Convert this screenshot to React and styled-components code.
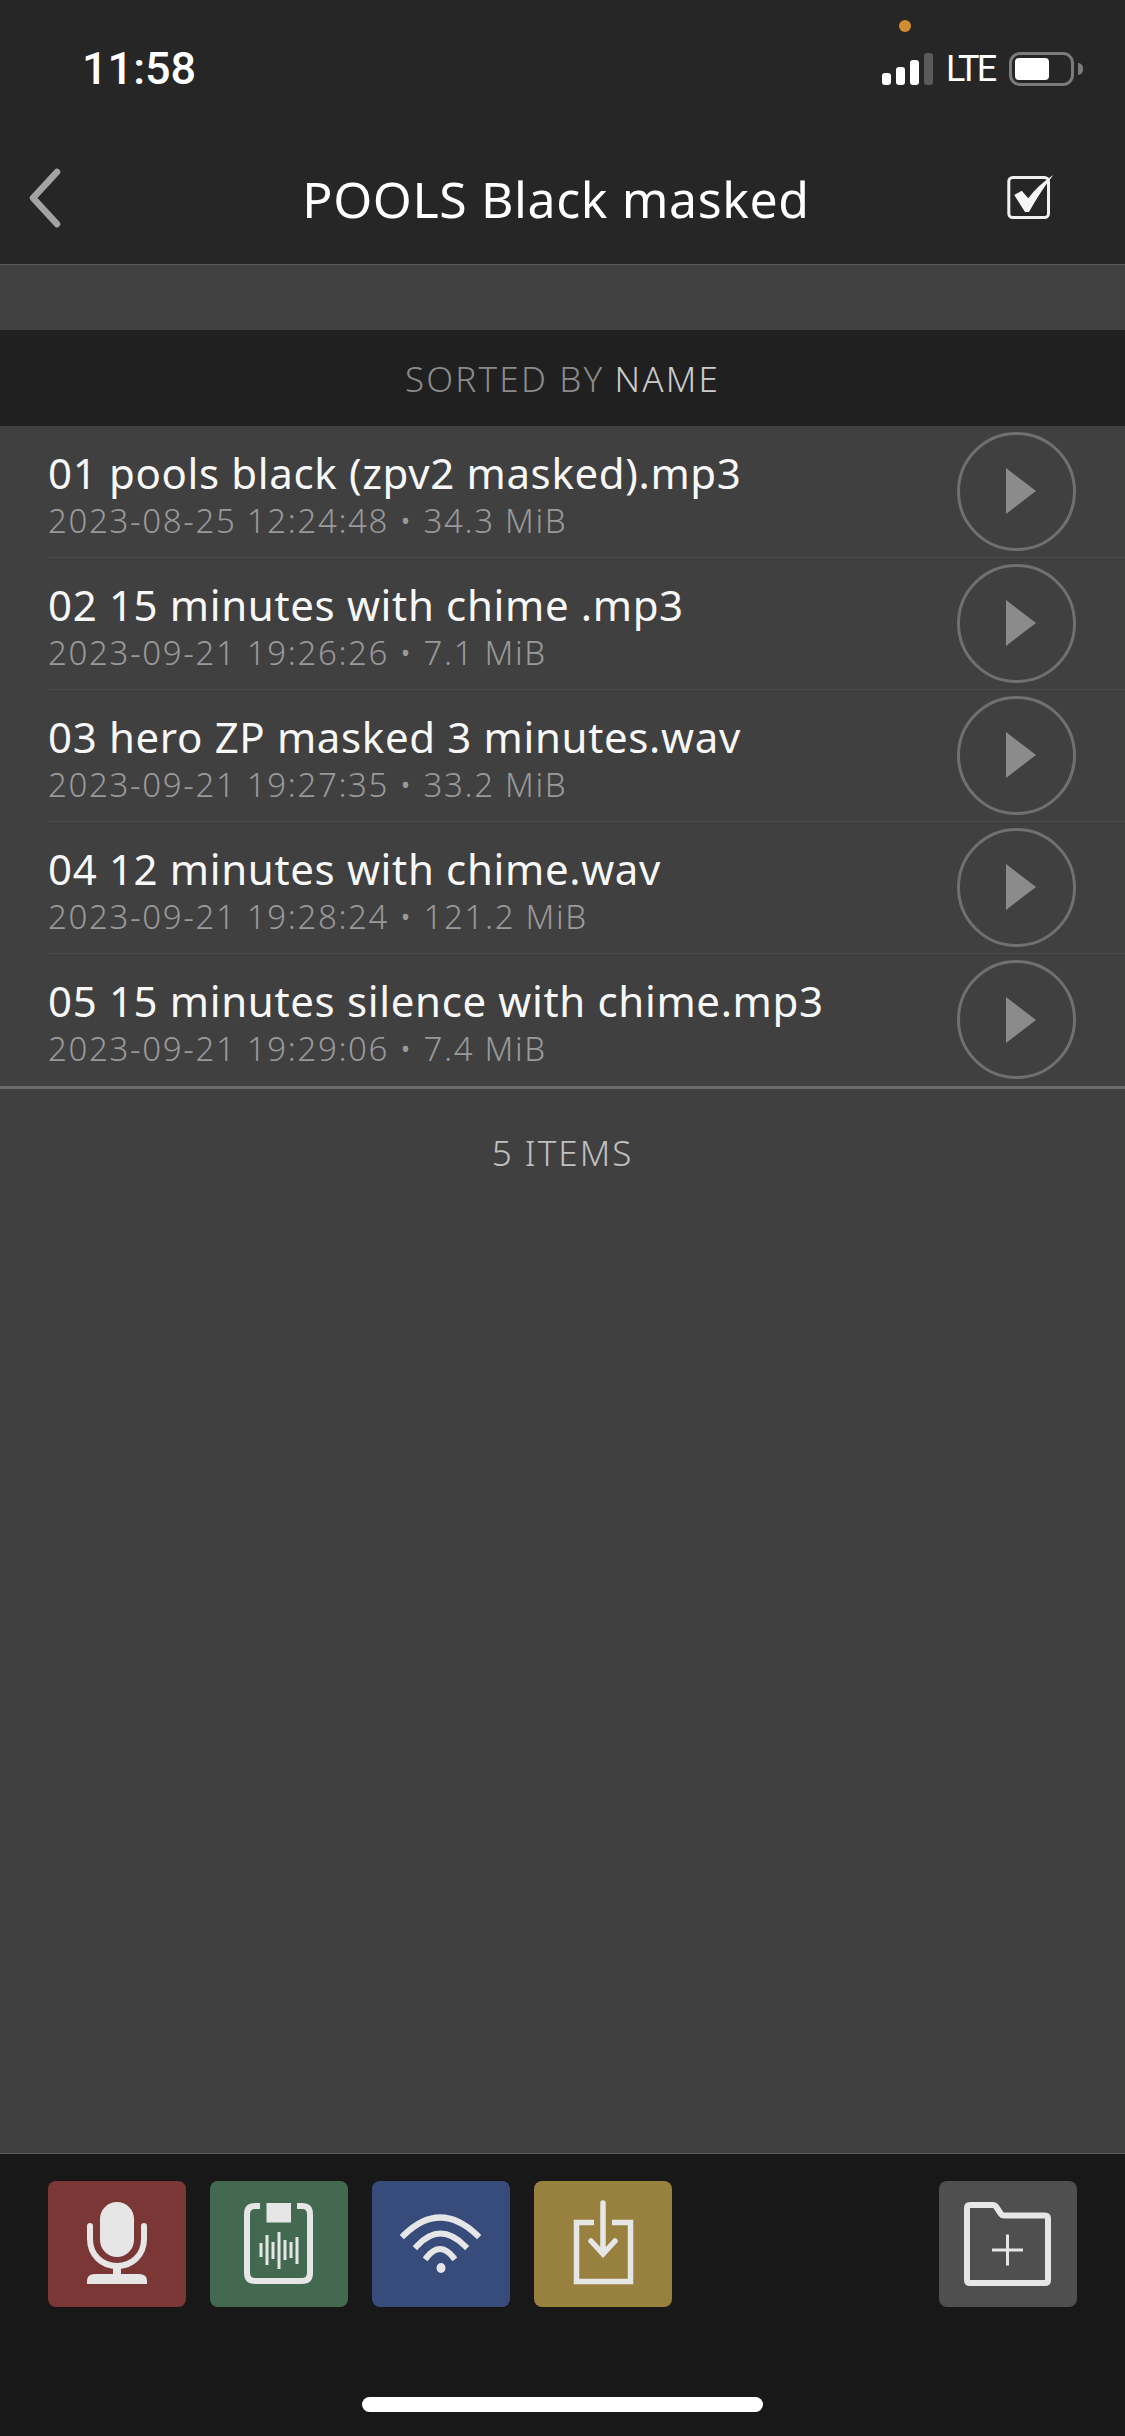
import React from 'react'
import styled, { createGlobalStyle } from 'styled-components'

const files = [
  { name: '01 pools black (zpv2 masked).mp3', meta: '2023-08-25 12:24:48 • 34.3 MiB' },
  { name: '02 15 minutes with chime .mp3', meta: '2023-09-21 19:26:26 • 7.1 MiB' },
  { name: '03 hero ZP masked 3 minutes.wav', meta: '2023-09-21 19:27:35 • 33.2 MiB' },
  { name: '04 12 minutes with chime.wav', meta: '2023-09-21 19:28:24 • 121.2 MiB' },
  { name: '05 15 minutes silence with chime.mp3', meta: '2023-09-21 19:29:06 • 7.4 MiB' },
]

const waveBars = [
  [51, 62, 76], [57, 54, 84], [63, 61, 78], [69, 51, 88], [75, 59, 79], [81, 61, 77], [87, 56, 83],
]

function App() {
  return (
    <>
      <GlobalStyle />
      <Screen>
        <TopArea>
          <StatusBar>
            <Time>11:58</Time>
            <CameraDot />
            <StatusRight>
              <Signal>
                <SignalBar height="12px" />
                <SignalBar height="18px" />
                <SignalBar height="25px" />
                <SignalBar height="32px" dim />
              </Signal>
              <Lte>LTE</Lte>
              <Battery>
                <BatteryFill />
                <BatteryNub />
              </Battery>
            </StatusRight>
          </StatusBar>
          <NavBar>
            <BackIcon width="40" height="62" viewBox="0 0 40 62">
              <path d="M32 5 L8 31 L32 57" fill="none" stroke="#a3a3a3" strokeWidth="6.5" strokeLinecap="round" strokeLinejoin="round" />
            </BackIcon>
            <Title>POOLS Black masked</Title>
            <CheckIcon width="50" height="48" viewBox="0 0 50 48">
              <rect x="3.8" y="3.5" width="39.7" height="40" rx="4" fill="none" stroke="#f0f0f0" strokeWidth="3" />
              <path d="M9.3 21 L16.7 16.7 L23.3 24.3 Q33 11 48.3 1 Q35 18 24 38 H20 Z" fill="#f5f5f5" />
            </CheckIcon>
          </NavBar>
        </TopArea>
        <Band />
        <SortBar>
          <SortLabel>SORTED BY</SortLabel> <SortValue>NAME</SortValue>
        </SortBar>
        <List>
          {files.map((file) => (
            <Row key={file.name}>
              <RowText>
                <FileName>{file.name}</FileName>
                <FileMeta>{file.meta}</FileMeta>
              </RowText>
              <PlayButton>
                <PlayTriangle width="30" height="46" viewBox="0 0 30 46">
                  <path d="M0 0 L30 23 L0 46 Z" fill="#8b8b8b" />
                </PlayTriangle>
              </PlayButton>
            </Row>
          ))}
        </List>
        <Count>5 ITEMS</Count>
        <Spacer />
        <BottomBar>
          <Tools>
            <ToolGroup>
              <Tool background="#7b3735">
                <svg width="138" height="126" viewBox="0 0 138 126">
                  <rect x="52" y="21" width="34" height="55" rx="17" fill="#e6e6e6" />
                  <path d="M42 45 V58 C42 74 54 85 69 85 C84 85 96 74 96 58 V45" fill="none" stroke="#e6e6e6" strokeWidth="6" strokeLinecap="round" />
                  <path d="M65 85 H73 V93 H91 Q99 93 99 100 V103 H39 V100 Q39 93 47 93 H65 Z" fill="#e6e6e6" />
                </svg>
              </Tool>
              <Tool background="#436a50">
                <svg width="138" height="126" viewBox="0 0 138 126">
                  <path d="M50 25 H45 Q37 25 37 33 V92 Q37 100 45 100 H92 Q100 100 100 92 V33 Q100 25 92 25 H87" fill="none" stroke="#e6e6e6" strokeWidth="6" />
                  <rect x="56.5" y="22" width="24.5" height="19.5" fill="#e6e6e6" />
                  {waveBars.map(([x, y1, y2]) => (
                    <line key={x} x1={x} x2={x} y1={y1} y2={y2} stroke="#e6e6e6" strokeWidth="3" />
                  ))}
                </svg>
              </Tool>
              <Tool background="#384c7c">
                <svg width="138" height="126" viewBox="0 0 138 126">
                  <path d="M32 54 Q68 19 105 54" fill="none" stroke="#e6e6e6" strokeWidth="6" strokeLinecap="square" />
                  <path d="M45 65 Q68 40 93 65" fill="none" stroke="#e6e6e6" strokeWidth="6" strokeLinecap="square" />
                  <path d="M55 76 Q68 60 81 76" fill="none" stroke="#e6e6e6" strokeWidth="6" strokeLinecap="square" />
                  <ellipse cx="69" cy="87" rx="4.5" ry="5" fill="#e6e6e6" />
                </svg>
              </Tool>
              <Tool background="#98803f">
                <svg width="138" height="126" viewBox="0 0 138 126">
                  <path d="M60 41.5 H42.5 V100.5 H96.5 V41.5 H78" fill="none" stroke="#e6e6e6" strokeWidth="5.5" />
                  <path d="M69 22 V72 M57 60 L69 73 L81 60" fill="none" stroke="#e6e6e6" strokeWidth="5.5" strokeLinecap="round" />
                </svg>
              </Tool>
            </ToolGroup>
            <Tool background="#4f4f4f">
              <svg width="138" height="126" viewBox="0 0 138 126">
                <path d="M28 27 Q28 24 31 24 H54 Q56 24 57 25.5 L62 33 Q63 34.5 65 34.5 H106 Q109 34.5 109 37.5 V99 Q109 102 106 102 H31 Q28 102 28 99 Z" fill="none" stroke="#e6e6e6" strokeWidth="6" />
                <path d="M68.5 53.5 V84.5 M53 69 H84" fill="none" stroke="#e6e6e6" strokeWidth="3" />
              </svg>
            </Tool>
          </Tools>
          <HomeIndicator />
        </BottomBar>
      </Screen>
    </>
  )
}

export default App

const GlobalStyle = createGlobalStyle`
  html, body {
    margin: 0;
    padding: 0;
    background: #404040;
  }
  * {
    box-sizing: border-box;
  }
`

const Screen = styled.div`
  width: 1125px;
  height: 2436px;
  display: flex;
  flex-direction: column;
  background: #404040;
  font-family: "Noto Sans", Roboto, sans-serif;
  overflow: hidden;
`

const TopArea = styled.div`
  height: 265px;
  background: #262626;
  border-bottom: 1px solid #5c5c5c;
`

const StatusBar = styled.div`
  position: relative;
  height: 133px;
  display: flex;
  justify-content: space-between;
  padding: 52px 51px 0 82px;
`

const Time = styled.div`
  color: #fff;
  font-family: Roboto, sans-serif;
  font-size: 45px;
  font-weight: 500;
  line-height: 34px;
`

const CameraDot = styled.div`
  position: absolute;
  left: 899px;
  top: 20px;
  width: 12px;
  height: 12px;
  border-radius: 50%;
  background: #d08d31;
`

const StatusRight = styled.div`
  display: flex;
  align-items: flex-start;
`

const Signal = styled.div`
  display: flex;
  align-items: flex-end;
  gap: 5px;
  height: 33px;
  margin-right: 13px;
`

const SignalBar = styled.div`
  width: 9px;
  height: ${props => props.height};
  border-radius: 3px;
  background: ${props => (props.dim ? '#5a5a5a' : '#fff')};
`

const Lte = styled.div`
  color: #fff;
  font-family: Roboto, sans-serif;
  font-size: 36px;
  line-height: 34px;
  letter-spacing: -2.6px;
  margin-right: 14px;
  width: 49px;
`

const Battery = styled.div`
  position: relative;
  width: 65px;
  height: 34px;
  border: 3px solid #7b7b7b;
  border-radius: 11px;
  padding: 3px;
`

const BatteryFill = styled.div`
  width: 34px;
  height: 22px;
  border-radius: 4px;
  background: #fff;
`

const BatteryNub = styled.div`
  position: absolute;
  left: 66px;
  top: 8px;
  width: 5px;
  height: 12px;
  border-radius: 0 6px 6px 0;
  background: #7b7b7b;
`

const NavBar = styled.div`
  display: flex;
  align-items: center;
  height: 131px;
  padding: 0 70px 0 25px;
`

const BackIcon = styled.svg`
  flex: none;
  margin-top: -1px;
`

const Title = styled.div`
  flex: 1;
  text-align: center;
  color: #fff;
  font-size: 50px;
  font-weight: 400;
  letter-spacing: 0.6px;
  line-height: 60px;
  margin-left: 42px;
  margin-top: 1px;
`

const CheckIcon = styled.svg`
  flex: none;
  margin-top: -2px;
`

const Band = styled.div`
  height: 65px;
  background: #414141;
`

const SortBar = styled.div`
  height: 96px;
  display: flex;
  align-items: center;
  justify-content: center;
  gap: 10px;
  background: #202020;
  font-size: 35px;
  font-weight: 300;
  letter-spacing: 2.2px;
`

const SortLabel = styled.span`
  color: #8a8a8a;
`

const SortValue = styled.span`
  color: #cccccc;
`

const List = styled.div`
  border-bottom: 3px solid #6b6b6b;
`

const Row = styled.div`
  height: 132px;
  margin-left: 48px;
  padding-right: 49px;
  display: flex;
  align-items: center;
  justify-content: space-between;
  border-bottom: 1px solid #4b4b4b;
  &:last-child {
    border-bottom: 0;
  }
`

const RowText = styled.div`
  display: flex;
  flex-direction: column;
  gap: 3px;
  margin-top: 5px;
`

const FileName = styled.div`
  color: #f7f7f7;
  font-size: 42px;
  font-weight: 400;
  letter-spacing: 0.65px;
  line-height: 50px;
`

const FileMeta = styled.div`
  color: #999999;
  font-size: 33px;
  font-weight: 300;
  letter-spacing: 1.65px;
  line-height: 40px;
`

const PlayButton = styled.div`
  width: 119px;
  height: 119px;
  border: 3px solid #707070;
  border-radius: 50%;
  display: flex;
  align-items: center;
  justify-content: center;
  margin-top: -1px;
`

const PlayTriangle = styled.svg`
  margin-left: 8px;
`

const Count = styled.div`
  margin-top: 44px;
  text-align: center;
  color: #c0c0c0;
  font-size: 35px;
  font-weight: 300;
  letter-spacing: 2px;
  line-height: 40px;
`

const Spacer = styled.div`
  flex: 1;
`

const BottomBar = styled.div`
  height: 283px;
  background: #181818;
  border-top: 1px solid #5e5e5e;
  display: flex;
  flex-direction: column;
  align-items: center;
`

const Tools = styled.div`
  width: 100%;
  display: flex;
  justify-content: space-between;
  padding: 27px 48px 0;
`

const ToolGroup = styled.div`
  display: flex;
  gap: 24px;
`

const Tool = styled.div`
  width: 138px;
  height: 126px;
  border-radius: 8px;
  background: ${props => props.background};
  svg {
    display: block;
  }
`

const HomeIndicator = styled.div`
  width: 401px;
  height: 15px;
  margin-top: 90px;
  border-radius: 8px;
  background: #fff;
`
